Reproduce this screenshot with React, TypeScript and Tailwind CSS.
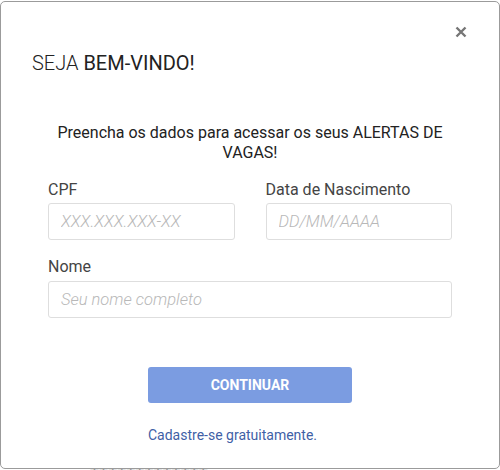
import React from "react";

export default function App() {
  const font = { fontFamily: "Roboto, 'Liberation Sans', sans-serif" };
  return (
    <div className="relative h-[470px] w-[500px] overflow-hidden bg-white" style={font}>
      <span className="absolute left-[183px] top-[-14px] text-[15px] leading-[18px] text-[#888]">
        ooo ooooooooo
      </span>
      <span className="absolute left-[90px] top-[465px] text-[15px] leading-[18px] text-[#999]">
        TTTTTTTTTTTTT
      </span>
      <div className="relative z-10 mt-px flex h-[468px] w-[500px] flex-col rounded-[5px] border border-[#9b9b9b] bg-white">
        <div className="flex justify-end pr-[32px] pt-[24px]">
          <svg width="12" height="12" viewBox="0 0 12 12" className="block">
            <path d="M1.5 1.5 L10.5 10.5 M10.5 1.5 L1.5 10.5" stroke="#767676" strokeWidth="2.4" strokeLinecap="butt" />
          </svg>
        </div>
        <h1 className="mt-[11px] pl-[31px] text-[20px] leading-[28px] text-[#222]">
          <span className="font-light">SEJA </span>
          <span className="font-normal">BEM-VINDO!</span>
        </h1>
        <div className="flex flex-col px-[47px]">
          <p className="mt-[46px] text-center text-[16px] leading-[20px] text-[#222]">
            Preencha os dados para acessar os seus ALERTAS DE VAGAS!
          </p>
          <div className="mt-[17px] grid grid-cols-2 gap-x-[31px]">
            <div className="flex flex-col">
              <label className="text-[16px] leading-[20px] text-[#444]">CPF</label>
              <input
                className="mt-[3px] h-[37px] rounded-[3px] border border-[#dedede] px-[12px] text-[16.5px] font-light italic text-[#333] outline-none placeholder:text-[#b8b8b8]"
                placeholder="XXX.XXX.XXX-XX"
              />
            </div>
            <div className="flex flex-col">
              <label className="text-[16px] leading-[20px] text-[#444]">Data de Nascimento</label>
              <input
                className="mt-[3px] h-[37px] rounded-[3px] border border-[#dedede] px-[12px] text-[16.5px] font-light italic text-[#333] outline-none placeholder:text-[#b8b8b8]"
                placeholder="DD/MM/AAAA"
              />
            </div>
          </div>
          <label className="mt-[17px] text-[16px] leading-[20px] text-[#444]">Nome</label>
          <input
            className="mt-[4px] h-[37px] rounded-[3px] border border-[#dedede] px-[12px] text-[16.5px] font-light italic text-[#333] outline-none placeholder:text-[#b8b8b8]"
            placeholder="Seu nome completo"
          />
          <div className="flex flex-col items-start pl-[100px]">
            <button className="mt-[49px] h-[36px] w-[204px] rounded-[3px] bg-[#7b9ce1] text-[14px] font-bold text-white">
              CONTINUAR
            </button>
            <a className="mt-[22px] text-[14px] leading-[20px] text-[#3f5fa6]">Cadastre-se gratuitamente.</a>
          </div>
        </div>
      </div>
    </div>
  );
}
